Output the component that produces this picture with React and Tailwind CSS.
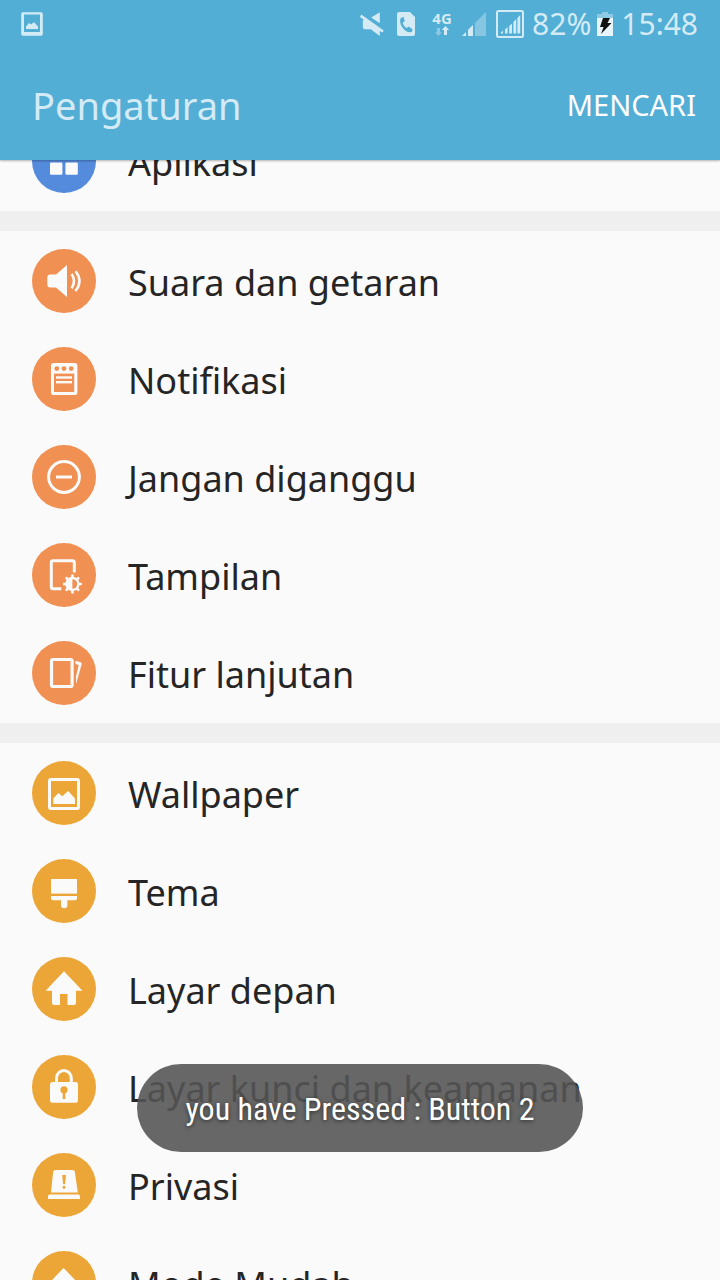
import React from "react";

const white = "#fafafa";

function Icon({ bg, children }) {
  return (
    <svg viewBox="0 0 64 64" className="size-16 shrink-0" fill={white} aria-hidden="true">
      <circle cx="32" cy="32" r="32" fill={bg} />
      {children}
    </svg>
  );
}

const BLUE = "#548bdd";
const ORANGE = "#f09052";
const AMBER = "#eca638";

const house = (
  <path d="M32 14.3 50.4 33.7H44V46a2 2 0 0 1-2 2H35.5V37H28v11h-6a2 2 0 0 1-2-2V33.7H13.6Z" />
);

const groups = [
  {
    color: BLUE,
    items: [
      {
        label: "Aplikasi",
        icon: (
          <>
            <rect x="18" y="18" width="12.4" height="12.4" rx="1.3" />
            <rect x="33.4" y="18" width="12.4" height="12.4" rx="1.3" />
            <rect x="18" y="33.4" width="12.4" height="12.4" rx="1.3" />
            <rect x="33.4" y="33.4" width="12.4" height="12.4" rx="1.3" />
          </>
        ),
      },
    ],
  },
  {
    color: ORANGE,
    items: [
      {
        label: "Suara dan getaran",
        icon: (
          <>
            <path d="M18.3 25.4H24L35 16v32L24 38.6h-5.7a3 3 0 0 1-3-3v-7.2a3 3 0 0 1 3-3Z" />
            <g fill="none" stroke={white} strokeWidth="2.6">
              <path d="M39.6 25q4.8 7 0 14.2" />
              <path d="M43.6 22.2q7.8 10-.2 19.8" />
            </g>
          </>
        ),
      },
      {
        label: "Notifikasi",
        icon: (
          <>
            <rect x="19" y="16" width="26.4" height="32" rx="2.5" />
            <rect x="22" y="26.6" width="20.2" height="18.4" fill={ORANGE} />
            <circle cx="24.8" cy="21.6" r="2.4" fill={ORANGE} />
            <circle cx="32" cy="21.6" r="2.4" fill={ORANGE} />
            <circle cx="39.2" cy="21.6" r="2.4" fill={ORANGE} />
            <rect x="24" y="29.3" width="16" height="2.4" />
            <rect x="24" y="34" width="16" height="2.4" />
          </>
        ),
      },
      {
        label: "Jangan diganggu",
        icon: (
          <>
            <circle cx="32" cy="32" r="15.4" fill="none" stroke={white} strokeWidth="3" />
            <rect x="24" y="30.5" width="16" height="3" />
          </>
        ),
      },
      {
        label: "Tampilan",
        icon: (
          <>
            <path
              d="M29.3 45.8H20.8a1.5 1.5 0 0 1-1.5-1.5V19.2a1.5 1.5 0 0 1 1.5-1.5h20a1.5 1.5 0 0 1 1.5 1.5v10.3"
              fill="none"
              stroke={white}
              strokeWidth="3"
            />
            <circle cx="40.4" cy="41" r="7.2" />
            <path
              d="M40.4 31.6v18.8M31 41h18.8M33.8 34.4 47 47.6M47 34.4 33.8 47.6"
              stroke={white}
              strokeWidth="2.6"
            />
            <path d="M40.4 36.2a4.8 4.8 0 0 1 0 9.6Z" fill={ORANGE} />
          </>
        ),
      },
      {
        label: "Fitur lanjutan",
        icon: (
          <>
            <rect x="19.5" y="18.5" width="20.6" height="27" rx="1.5" fill="none" stroke={white} strokeWidth="3.2" />
            <path d="M43.4 19.8 48 21a2 2 0 0 1 1.6 2.500L44 43.200V35.500L46.700 24l-3.300-1Z" />
          </>
        ),
      },
    ],
  },
  {
    color: AMBER,
    items: [
      {
        label: "Wallpaper",
        icon: (
          <>
            <rect x="17.5" y="18.5" width="29" height="29" rx="1.5" fill="none" stroke={white} strokeWidth="3" />
            <path d="M21.3 43V37.6L26.4 32l3.8 3.2 6-5.3 6.8 7.6V43Z" />
          </>
        ),
      },
      {
        label: "Tema",
        icon: (
          <>
            <rect x="19" y="20" width="26" height="14.6" />
            <path d="M19 37h26v2.2a2 2 0 0 1-2 2h-7.6V46a3.2 3.2 0 0 1-6.4 0v-4.8h-8a2 2 0 0 1-2-2Z" />
          </>
        ),
      },
      { label: "Layar depan", icon: house },
      {
        label: "Layar kunci dan keamanan",
        icon: (
          <>
            <rect x="18" y="27" width="28" height="20.8" rx="2.5" />
            <path d="M24.5 28v-4.5a7.4 8 0 0 1 14.8 0V28" fill="none" stroke={white} strokeWidth="3" />
            <circle cx="32" cy="34.8" r="3.6" fill={AMBER} />
            <rect x="30.7" y="36" width="2.6" height="8" fill={AMBER} />
          </>
        ),
      },
      {
        label: "Privasi",
        icon: (
          <>
            <path d="M23.5 17h17a2.4 2.4 0 0 1 2.4 2.2L45.8 39.5H19L21.1 19.2A2.4 2.4 0 0 1 23.5 17Z" />
            <path d="M17 41.6h30l1 1.6V46H16v-2.8Z" />
            <path d="M30.2 22h3.8l-.9 9.2h-2Z" fill={AMBER} />
            <circle cx="32" cy="34.2" r="1.5" fill={AMBER} />
          </>
        ),
      },
      { label: "Mode Mudah", icon: <g transform="translate(-.4 2.6)">{house}</g> },
    ],
  },
];

function StatusBar() {
  return (
    <div className="flex h-12 items-center justify-between pl-5 pr-[22px] text-[30px] leading-none text-[#d4ebf5]">
      <svg viewBox="0 0 24 26" className="h-[26px] w-6" fill="currentColor" aria-hidden="true">
        <path
          fillRule="evenodd"
          d="M3 1.2h18a1.8 1.8 0 0 1 1.8 1.8v20a1.8 1.8 0 0 1-1.8 1.8H3A1.8 1.8 0 0 1 1.2 23V3A1.8 1.8 0 0 1 3 1.2ZM4 3.6V21h16V3.6Z"
        />
        <path d="M6 18v-2.6l3-3.4 2 1.6 3-2.4 4 4.2V18Z" />
      </svg>
      <div className="flex items-center">
        <svg viewBox="0 0 24 24" className="size-6" fill="currentColor" aria-hidden="true">
          <path d="M19.8.3v11L11.2 5.6Z" />
          <path d="M1.2 2.6 23.800 18.400 22.500 20.600 19.800 19V24l-9-6.800H5a2.200 2.200 0 0 1-2.200-2.200V9.500a2 2 0 0 1 1-1.700L0 5Z" />
        </svg>
        <svg viewBox="0 0 20 24" className="ml-3 h-6 w-5" fill="currentColor" aria-hidden="true">
          <path
            fillRule="evenodd"
            d="M3 0h11l5 5v17a2 2 0 0 1-2 2H3a2 2 0 0 1-2-2V2a2 2 0 0 1 2-2Zm1.6 6.2c-2.4 6 4.4 15.4 11.2 13.9l.8-2.9-4-2.8-1.8 1.6c-2.4-1.1-3.6-3-4-5.4l2-1.4L7.400 4.800Z"
          />
        </svg>
        <div className="ml-3.5 flex w-6 flex-col items-center text-[15px] leading-3 font-bold">
          <span>4G</span>
          <svg viewBox="0 0 16 10" className="mt-0.5 h-2.5 w-4" fill="currentColor" aria-hidden="true">
            <path d="M11.500 0 15.200 4H13v5h-3V4H7.800Z" />
            <path d="M4.500 10 1 6.200h2V2h3v4.200h2Z" opacity=".45" />
          </svg>
        </div>
        <svg viewBox="0 0 24 24" className="ml-2 size-6" fill="currentColor" aria-hidden="true">
          <path d="M0 24 4 20v4ZM6 24v-6.200L11 13v11Z" />
          <path d="M13 24V11L24 0v24Z" opacity=".4" />
        </svg>
        <svg viewBox="0 0 28 28" className="ml-2.5 size-7" aria-hidden="true">
          <rect x="1" y="1" width="26" height="26" rx="1.5" fill="none" stroke="currentColor" strokeWidth="2" />
          <path
            d="M5 23.500v-1.200l2-1.500v2.700ZM9 23.500v-4l2.600-2.400v6.400ZM13.200 23.500v-7.400l2.800-2.600v10ZM17.400 23.500V12l2.800-3v14.500ZM21.400 23.500V8l2.800-3v18.500Z"
            fill="currentColor"
          />
        </svg>
        <span className="ml-2">82%</span>
        <svg viewBox="0 0 16 24" className="ml-1.5 h-6 w-4" aria-hidden="true">
          <path d="M5 0h6v2h5v4H0V2h5Z" fill="#8fcae4" />
          <rect y="6" width="16" height="18" fill="#e8f5fa" />
          <path d="M6 6h7L10.500 11h4L4 22l2.600-7H3Z" fill="#111" />
        </svg>
        <span className="ml-2">15:48</span>
      </div>
    </div>
  );
}

export default function App() {
  return (
    <div className="relative flex h-screen flex-col overflow-hidden bg-[#fafafa] font-['Noto_Sans',sans-serif] text-[#252525]">
      <header className="z-10 shrink-0 bg-[#52aed5] shadow-[0_1px_2px_rgba(0,0,0,0.3)]">
        <StatusBar />
        <div className="flex h-28 items-center justify-between pl-8 pr-6">
          <h1 className="pt-0.5 text-[38px] leading-none text-[#d4ebf5]">Pengaturan</h1>
          <button type="button" className="text-[29px] leading-none text-white">
            MENCARI
          </button>
        </div>
      </header>

      <main className="-mt-[49px] min-h-0 flex-1 overflow-hidden">
        <div className="flex flex-col gap-5 bg-[#efefef]">
          {groups.map((group) => (
            <ul key={group.color} className="bg-[#fafafa] py-px">
              {group.items.map((item) => (
                <li key={item.label}>
                  <a href="#" className="flex h-[98px] items-center gap-8 px-8 text-[36px] leading-none">
                    <Icon bg={group.color}>{item.icon}</Icon>
                    <span className="pt-1 leading-10 whitespace-nowrap">{item.label}</span>
                  </a>
                </li>
              ))}
            </ul>
          ))}
        </div>
      </main>

      <div className="pointer-events-none absolute inset-x-0 bottom-32 z-20 flex justify-center">
        <div
          role="status"
          className="flex h-22 items-center rounded-full bg-[#545454]/89 px-12 pt-0.5 font-['Roboto_Condensed','Liberation_Sans_Narrow',Roboto,sans-serif] text-[32px] leading-none whitespace-nowrap text-white [text-shadow:0_1px_4px_rgba(0,0,0,0.6)]"
        >
          you have Pressed : Button 2
        </div>
      </div>
    </div>
  );
}
